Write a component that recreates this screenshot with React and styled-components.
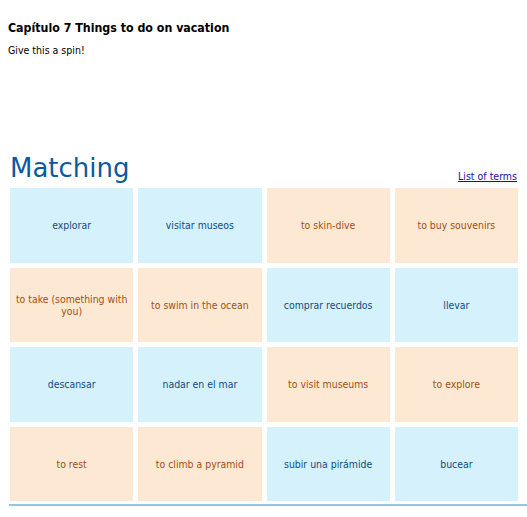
import React from 'react';
import styled, { createGlobalStyle } from 'styled-components';

const GlobalStyle = createGlobalStyle`
  html, body {
    margin: 0;
    padding: 0;
    background: #fff;
  }
  body {
    font-family: "DejaVu Sans", Verdana, sans-serif;
    color: #000;
  }
`

const Page = styled.div`
  width: 527px;
  overflow: hidden;
`

const Header = styled.header`
  padding: 21px 8px 0;
  height: 132px;
`

const Title = styled.h1`
  margin: 0;
  font-family: "DejaVu Sans Condensed", "DejaVu Sans", sans-serif;
  font-size: 12.3px;
  font-weight: bold;
  line-height: 15px;
`

const Subtitle = styled.p`
  margin: 8px 0 0;
  font-family: "DejaVu Sans Condensed", "DejaVu Sans", sans-serif;
  font-size: 10.5px;
  line-height: 13px;
`

const TopRow = styled.div`
  display: flex;
  justify-content: space-between;
  align-items: flex-end;
  padding: 0 10px 0 10px;
  margin-bottom: 5px;
`

const Heading = styled.h2`
  margin: 0;
  font-size: 26px;
  font-weight: normal;
  line-height: 30px;
  color: #0b5a9c;
`

const TermsLink = styled.a`
  font-family: "DejaVu Sans Condensed", "DejaVu Sans", sans-serif;
  font-size: 10.5px;
  color: #1a0dab;
  text-decoration: underline;
  margin-bottom: 1px;
  cursor: pointer;
`

const Grid = styled.div`
  display: grid;
  grid-template-columns: repeat(4, 1fr);
  grid-auto-rows: 74.5px;
  gap: 5px;
  padding: 0 9px 0 10px;
`

const Card = styled.div`
  display: flex;
  align-items: center;
  justify-content: center;
  text-align: center;
  padding: 0 5px;
  font-family: "DejaVu Sans Condensed", "DejaVu Sans", sans-serif;
  font-size: 10.4px;
  line-height: 12px;
  background: ${p => p.$term ? '#d5f1fc' : '#fde9d3'};
  color: ${p => p.$term ? '#104b82' : '#a04f12'};
`

const Rule = styled.div`
  margin: 3px 0 0 9px;
  border-top: 2px solid #8fc9db;
`

const cards = [
  { text: 'explorar', term: true },
  { text: 'visitar museos', term: true },
  { text: 'to skin-dive' },
  { text: 'to buy souvenirs' },
  { text: 'to take (something with you)' },
  { text: 'to swim in the ocean' },
  { text: 'comprar recuerdos', term: true },
  { text: 'llevar', term: true },
  { text: 'descansar', term: true },
  { text: 'nadar en el mar', term: true },
  { text: 'to visit museums' },
  { text: 'to explore' },
  { text: 'to rest' },
  { text: 'to climb a pyramid' },
  { text: 'subir una pirámide', term: true },
  { text: 'bucear', term: true },
]

const App = () => {
  return (
    <Page>
      <GlobalStyle />
      <Header>
        <Title>Capítulo 7 Things to do on vacation</Title>
        <Subtitle>Give this a spin!</Subtitle>
      </Header>

      <section>
        <TopRow>
          <Heading>Matching</Heading>
          <TermsLink>List of terms</TermsLink>
        </TopRow>
        <Grid>
          {cards.map((c, i) => (
            <Card key={i} $term={c.term}>{c.text}</Card>
          ))}
        </Grid>
        <Rule />
      </section>
    </Page>
  )
};

export default App;
